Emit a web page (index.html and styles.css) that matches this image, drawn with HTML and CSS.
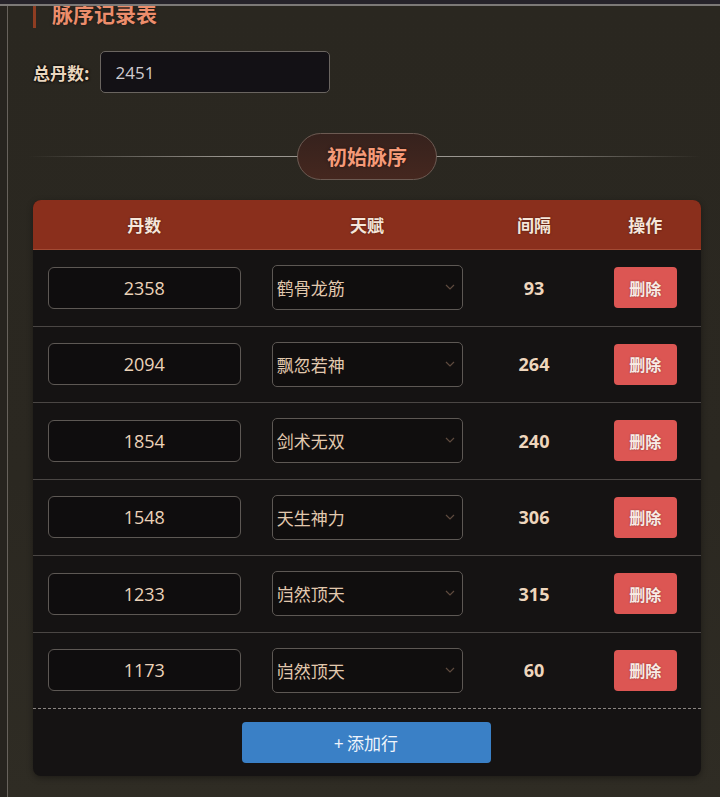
FILE: index.html
```html
<!DOCTYPE html>
<html lang="zh">
<head>
<meta charset="utf-8">
<title>脉序记录表</title>
<link rel="stylesheet" href="styles.css">
</head>
<body>
<div class="frame">
  <div class="panel">
    <h2 class="title">脉序记录表</h2>
    <div class="total">
      <label class="total-label">总丹数:</label>
      <input class="total-input" type="text" value="2451">
    </div>
    <div class="section">
      <span class="pill">初始脉序</span>
    </div>
    <div class="table">
      <div class="row head">
        <div class="cell">丹数</div>
        <div class="cell">天赋</div>
        <div class="cell">间隔</div>
        <div class="cell">操作</div>
      </div>
      <div class="row">
        <div class="cell"><input class="num" type="text" value="2358"></div>
        <div class="cell"><div class="sel"><select><option>鹤骨龙筋</option></select><svg class="chev" viewBox="0 0 10 6" width="10" height="6"><path d="M1 1l4 4 4-4" fill="none" stroke="currentColor" stroke-width="1.2"/></svg></div></div>
        <div class="cell gap">93</div>
        <div class="cell"><button class="del">删除</button></div>
      </div>
      <div class="row">
        <div class="cell"><input class="num" type="text" value="2094"></div>
        <div class="cell"><div class="sel"><select><option>飘忽若神</option></select><svg class="chev" viewBox="0 0 10 6" width="10" height="6"><path d="M1 1l4 4 4-4" fill="none" stroke="currentColor" stroke-width="1.2"/></svg></div></div>
        <div class="cell gap">264</div>
        <div class="cell"><button class="del">删除</button></div>
      </div>
      <div class="row">
        <div class="cell"><input class="num" type="text" value="1854"></div>
        <div class="cell"><div class="sel"><select><option>剑术无双</option></select><svg class="chev" viewBox="0 0 10 6" width="10" height="6"><path d="M1 1l4 4 4-4" fill="none" stroke="currentColor" stroke-width="1.2"/></svg></div></div>
        <div class="cell gap">240</div>
        <div class="cell"><button class="del">删除</button></div>
      </div>
      <div class="row">
        <div class="cell"><input class="num" type="text" value="1548"></div>
        <div class="cell"><div class="sel"><select><option>天生神力</option></select><svg class="chev" viewBox="0 0 10 6" width="10" height="6"><path d="M1 1l4 4 4-4" fill="none" stroke="currentColor" stroke-width="1.2"/></svg></div></div>
        <div class="cell gap">306</div>
        <div class="cell"><button class="del">删除</button></div>
      </div>
      <div class="row">
        <div class="cell"><input class="num" type="text" value="1233"></div>
        <div class="cell"><div class="sel"><select><option>岿然顶天</option></select><svg class="chev" viewBox="0 0 10 6" width="10" height="6"><path d="M1 1l4 4 4-4" fill="none" stroke="currentColor" stroke-width="1.2"/></svg></div></div>
        <div class="cell gap">315</div>
        <div class="cell"><button class="del">删除</button></div>
      </div>
      <div class="row last">
        <div class="cell"><input class="num" type="text" value="1173"></div>
        <div class="cell"><div class="sel"><select><option>岿然顶天</option></select><svg class="chev" viewBox="0 0 10 6" width="10" height="6"><path d="M1 1l4 4 4-4" fill="none" stroke="currentColor" stroke-width="1.2"/></svg></div></div>
        <div class="cell gap">60</div>
        <div class="cell"><button class="del">删除</button></div>
      </div>
      <div class="foot">
        <button class="add">+ 添加行</button>
      </div>
    </div>
  </div>
</div>
</body>
</html>
```
FILE: styles.css
```css
* { box-sizing: border-box; }
html, body { margin: 0; padding: 0; }
body {
  background: #26232a;
  font-family: "Open Sans", "Noto Sans CJK SC", sans-serif;
  height: 797px;
  overflow: hidden;
}
.frame {
  margin-top: 4px;
  border-top: 2px solid #7c7977;
  background: #27241f;
  height: 793px;
  padding-left: 7px;
}
.panel {
  height: 100%;
  border-left: 1px solid #67625c;
  background: linear-gradient(180deg, #2a2720 0%, #2b2821 60%, #2f2c24 100%);
  padding: 0 19px 0 25px;
  overflow: hidden;
}
.title {
  margin: -8px 0 0 0;
  height: 30px;
  display: flex;
  align-items: center;
  font-family: "Noto Sans CJK SC", sans-serif;
  font-size: 21px;
  font-weight: 700;
  color: #ec8d6c;
  border-left: 3px solid #8e3d22;
  padding-left: 16px;
  line-height: 1;
  text-shadow: 0 0 3px rgba(0,0,0,0.5);
}
.total {
  display: flex;
  align-items: center;
  gap: 10px;
  margin-top: 23px;
}
.total-label {
  font-family: "Noto Sans CJK SC", sans-serif;
  font-size: 17px;
  font-weight: 700;
  color: #ead6be;
  text-shadow: 0 0 3px #000, 0 0 2px #000;
}
.total-input {
  width: 230px;
  height: 42px;
  background: #131115;
  border: 1px solid #6a6560;
  border-radius: 5px;
  color: #cfcbcf;
  font-family: "Open Sans", sans-serif;
  font-size: 17px;
  padding: 0 15px;
  outline: none;
}
.section {
  position: relative;
  display: flex;
  justify-content: center;
  margin-top: 39px;
  height: 48px;
  align-items: center;
}
.section::before {
  content: "";
  position: absolute;
  left: -4px;
  right: 0;
  top: 50%;
  height: 1px;
  background: linear-gradient(90deg, rgba(140,135,130,0) 0%, #9a9690 30%, #9a9690 70%, rgba(140,135,130,0) 100%);
}
.pill {
  position: relative;
  width: 140px;
  height: 47px;
  border-radius: 24px;
  border: 1px solid #6c5a52;
  background: linear-gradient(180deg, #36221d 0%, #45271f 100%);
  display: flex;
  align-items: center;
  justify-content: center;
  font-family: "Noto Sans CJK SC", sans-serif;
  font-size: 20px;
  font-weight: 700;
  color: #f69a78;
  text-shadow: 0 0 3px rgba(0,0,0,0.6);
}
.table {
  margin-top: 20px;
  background: #151313;
  border-radius: 8px;
  overflow: hidden;
  box-shadow: 0 2px 6px rgba(0,0,0,0.35);
}
.row {
  display: grid;
  grid-template-columns: 2fr 2fr 1fr 1fr;
  border-bottom: 1px solid #4a4644;
  height: 76.5px;
  align-items: center;
}
.row.head {
  height: 50px;
  background: #8a2f1c;
  border-bottom: 1px solid #a24a33;
}
.row.head .cell {
  font-family: "Noto Sans CJK SC", sans-serif;
  font-size: 17px;
  font-weight: 700;
  color: #f6e6da;
  text-align: center;
  padding: 0;
  text-shadow: 0 0 2px rgba(0,0,0,0.5);
}
.row.last { border-bottom: 1px dashed #8a8582; }
.cell {
  padding: 0 15px;
  display: flex;
  justify-content: center;
  align-items: center;
}
.num {
  width: 100%;
  height: 42px;
  background: #0f0d0e;
  border: 1px solid #5d5854;
  border-radius: 6px;
  color: #ecd3b9;
  text-align: center;
  font-family: "Open Sans", sans-serif;
  font-size: 18px;
  outline: none;
}
.sel {
  position: relative;
  width: 100%;
  margin-left: 1px;
}
.sel select {
  -webkit-appearance: none;
  appearance: none;
  width: 100%;
  height: 45px;
  background: #100e0e;
  border: 1px solid #5d5854;
  border-radius: 5px;
  color: #e2c9ae;
  font-family: "Noto Sans CJK SC", sans-serif;
  font-size: 17px;
  padding: 0 4px;
  outline: none;
}
.chev {
  position: absolute;
  right: 8px;
  top: 19px;
  color: #5e4a3e;
}
.gap {
  font-family: "Open Sans", sans-serif;
  font-size: 18px;
  font-weight: 700;
  color: #eed6bd;
}
.del {
  width: 63px;
  height: 41px;
  border: none;
  border-radius: 4px;
  background: #dc5653;
  color: #f9ebe6;
  font-family: "Noto Sans CJK SC", sans-serif;
  font-size: 16px;
  font-weight: 700;
  padding: 0;
  text-shadow: 0 0 2px rgba(0,0,0,0.35);
}
.foot {
  display: flex;
  justify-content: center;
  padding: 13px 0 13px;
}
.add {
  width: 249px;
  height: 41px;
  margin-right: 2px;
  border: none;
  border-radius: 4px;
  background: #3a80c6;
  color: #eef4fb;
  font-family: "Noto Sans CJK SC", sans-serif;
  font-size: 17px;
  padding: 0;
}
```
